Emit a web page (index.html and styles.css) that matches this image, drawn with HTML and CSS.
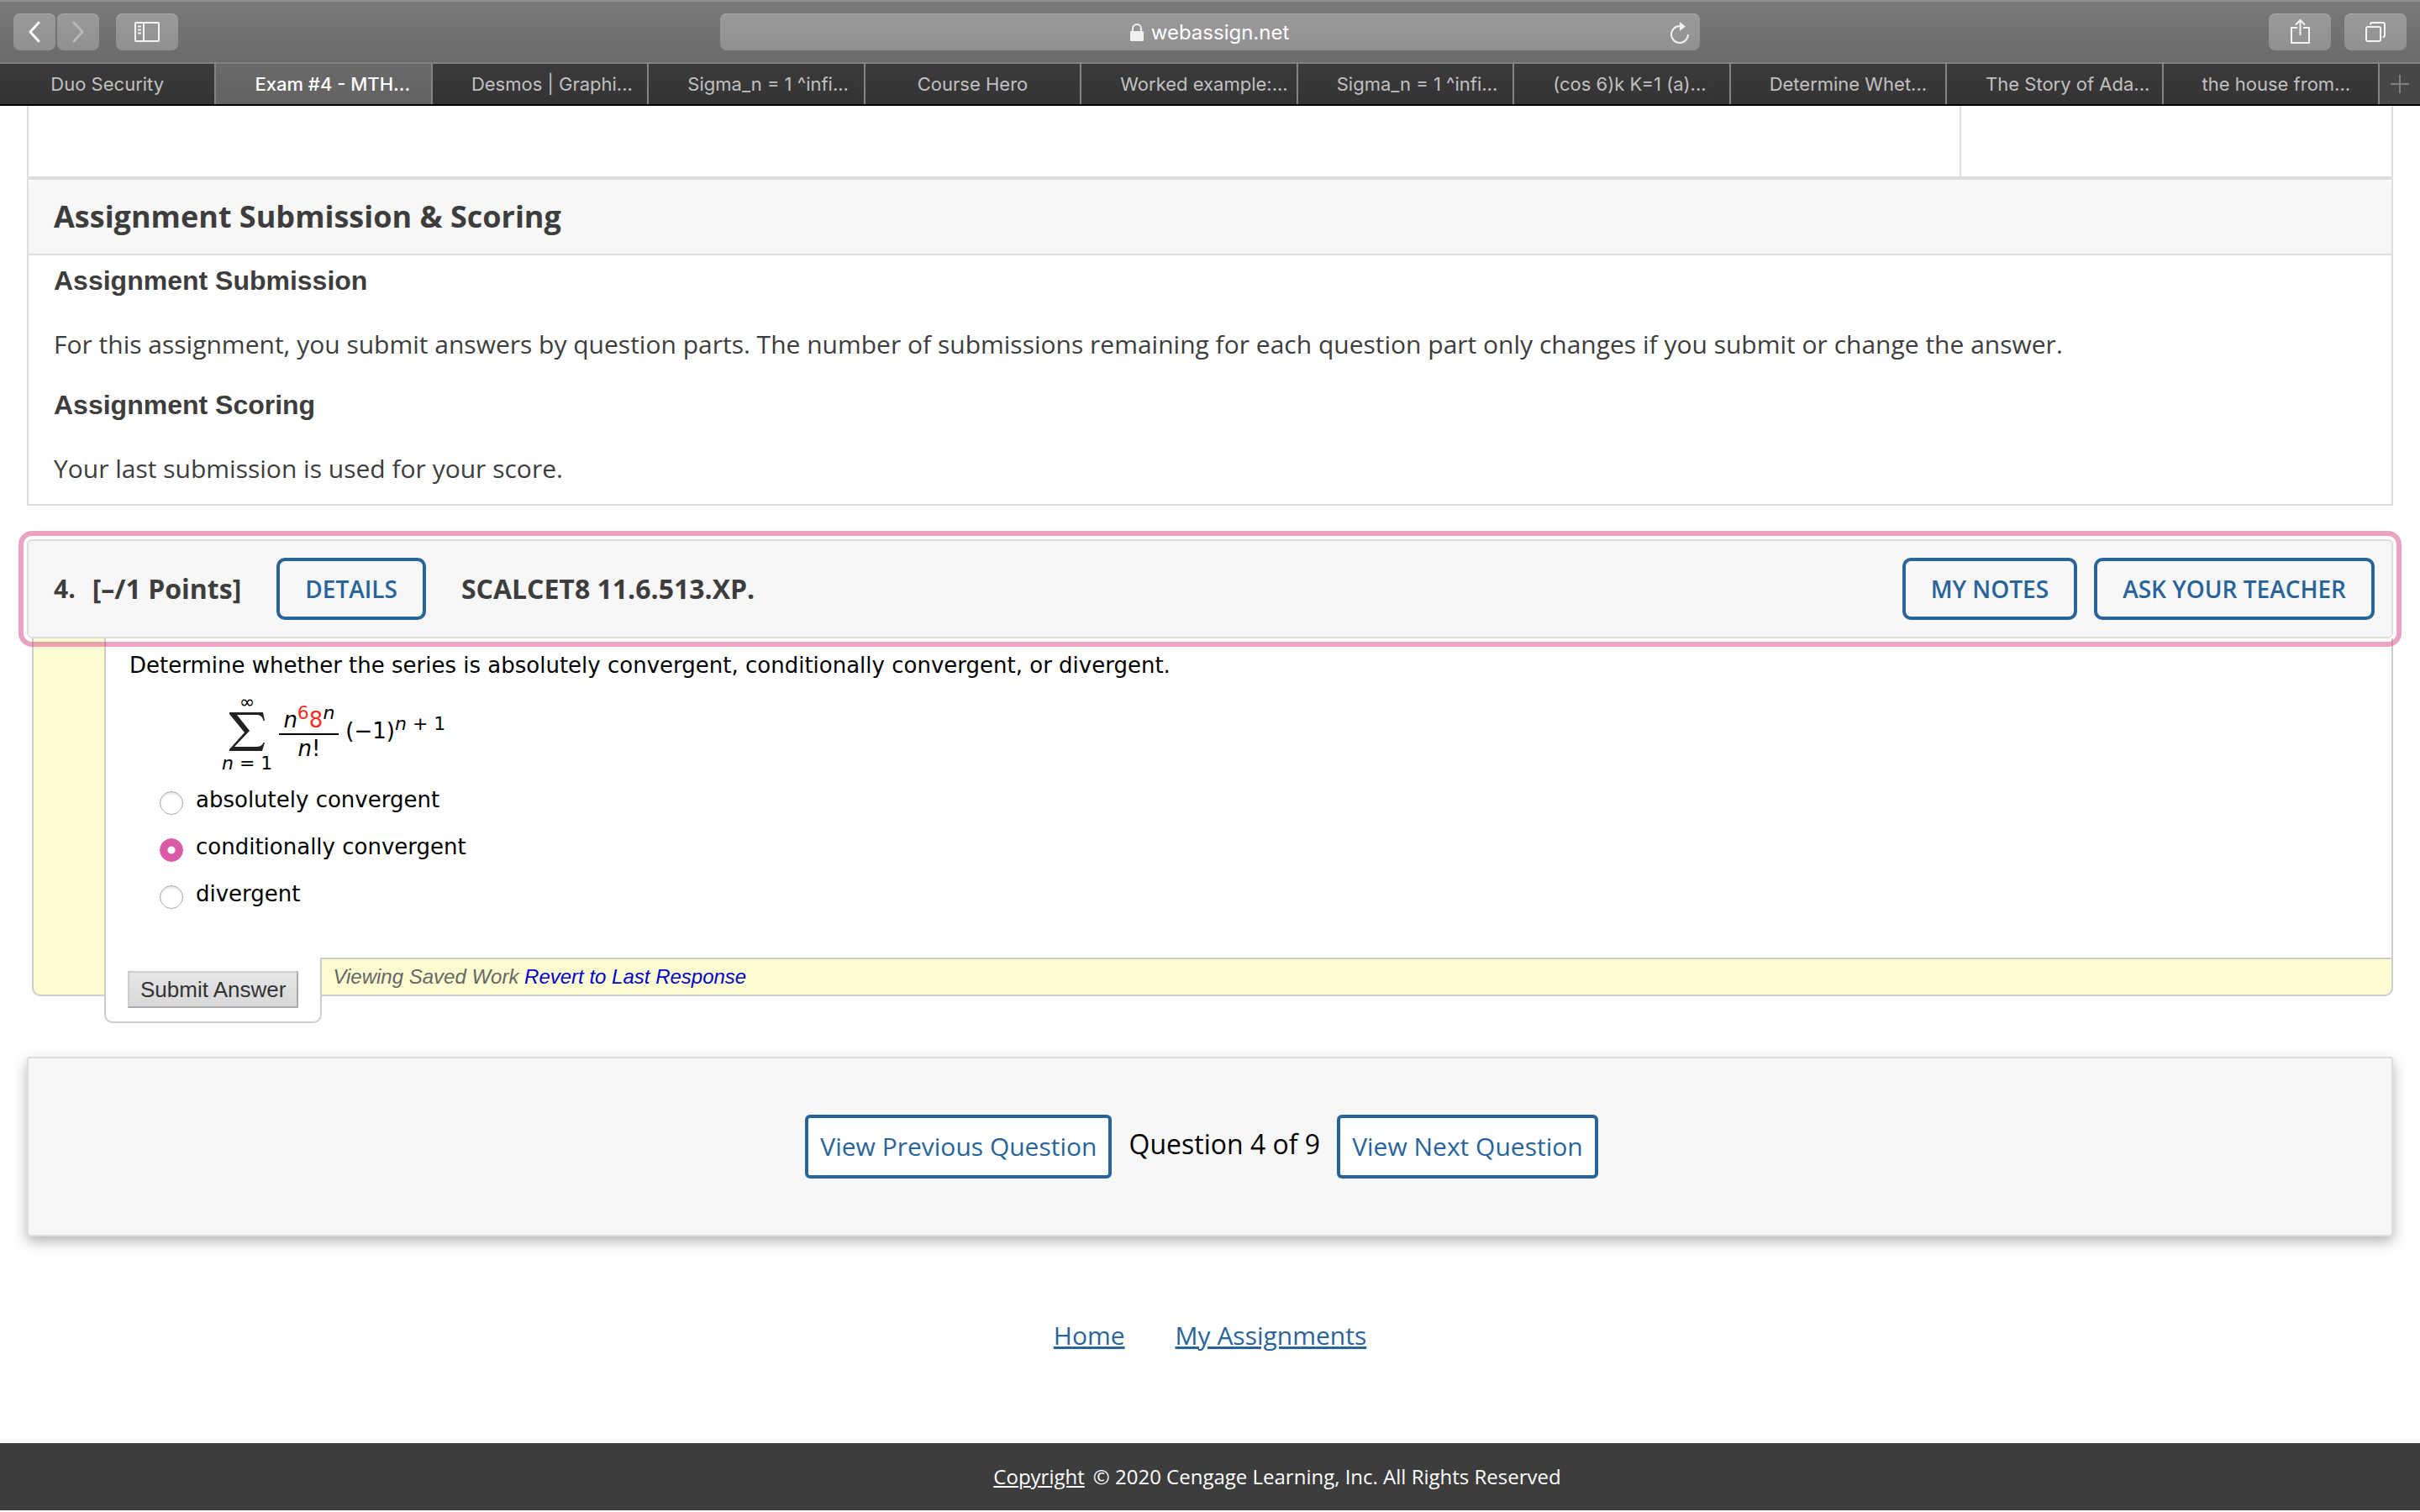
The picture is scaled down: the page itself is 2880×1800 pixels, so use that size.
FILE: index.html
```html
<!DOCTYPE html>
<html lang="en">
<head>
<meta charset="utf-8">
<title>Exam #4 - MTH</title>
<link rel="stylesheet" href="styles.css">
</head>
<body>
<header class="browser">
  <div class="toolbar">
    <div class="toolbar-group">
      <div class="history">
        <button class="tool tool-small" type="button" aria-label="Back">
          <svg width="50" height="44" viewBox="0 0 50 44"><path d="M30 11 L20 22 L30 33" fill="none" stroke="#fff" stroke-width="3" stroke-linecap="round" stroke-linejoin="round"/></svg>
        </button>
        <button class="tool tool-small" type="button" aria-label="Forward">
          <svg width="50" height="44" viewBox="0 0 50 44"><path d="M20 11 L30 22 L20 33" fill="none" stroke="#b9b7b8" stroke-width="3" stroke-linecap="round" stroke-linejoin="round"/></svg>
        </button>
      </div>
      <button class="tool" type="button" aria-label="Sidebar">
        <svg width="74" height="44" viewBox="0 0 74 44"><g fill="none" stroke="#f4f4f4" stroke-width="2"><rect x="23" y="11" width="28" height="22" rx="1"/><path d="M33 11V33"/><path d="M26 15.500H30M26 19.500H30M26 23.500H30"/></g></svg>
      </button>
    </div>
    <div class="address">
      <svg width="18" height="22" viewBox="0 0 18 22"><rect x="1" y="9" width="16" height="12" rx="1" fill="#f0f0f0"/><path d="M4 10V6a5 5 0 0 1 10 0V10" fill="none" stroke="#f0f0f0" stroke-width="2"/></svg>
      <span>webassign.net</span>
      <button class="reload" type="button" aria-label="Reload">
        <svg width="24" height="28" viewBox="0 0 24 28"><path d="M12 6 A10 10 0 1 0 22 16" fill="none" stroke="#f0f0f0" stroke-width="2"/><path d="M12 1 L19 6.500 L12 12Z" fill="#f0f0f0"/></svg>
      </button>
    </div>
    <div class="toolbar-group toolbar-end">
      <button class="tool" type="button" aria-label="Share">
        <svg width="74" height="44" viewBox="0 0 74 44"><g fill="none" stroke="#f4f4f4" stroke-width="2"><path d="M34 17H27V35H48V17H41"/><path d="M37.500 26V8M32 13.500L37.500 8L43 13.500"/></g></svg>
      </button>
      <button class="tool" type="button" aria-label="Show all tabs">
        <svg width="74" height="44" viewBox="0 0 74 44"><g fill="none" stroke="#f4f4f4" stroke-width="2"><rect x="26" y="16" width="17" height="17" rx="2"/><path d="M31 13.500V13a2 2 0 0 1 2-2H46a2 2 0 0 1 2 2V26a2 2 0 0 1-2 2H45.500"/></g></svg>
      </button>
    </div>
  </div>
  <nav class="tabs" aria-label="Tabs">
    <a class="tab tab-short" href="#">Duo Security</a>
    <a class="tab tab-current" href="#">Exam #4 - MTH...</a>
    <a class="tab" href="#">Desmos | Graphi...</a>
    <a class="tab" href="#">Sigma_n = 1 ^infi...</a>
    <a class="tab tab-short" href="#">Course Hero</a>
    <a class="tab" href="#">Worked example:...</a>
    <a class="tab" href="#">Sigma_n = 1 ^infi...</a>
    <a class="tab" href="#">(cos 6)k K=1 (a)...</a>
    <a class="tab" href="#">Determine Whet...</a>
    <a class="tab" href="#">The Story of Ada...</a>
    <a class="tab" href="#">the house from...</a>
    <button class="tab-new" type="button" aria-label="New tab">
      <svg width="24" height="24" viewBox="0 0 24 24"><path d="M12 1V23M1 12H23" stroke="#807e7f" stroke-width="2"/></svg>
    </button>
  </nav>
</header>

<main class="page">
  <section class="info">
    <div class="info-row"><div class="info-main"></div><div class="info-side"></div></div>
    <h2 class="info-title">Assignment Submission &amp; Scoring</h2>
    <div class="info-body">
      <h3>Assignment Submission</h3>
      <p>For this assignment, you submit answers by question parts. The number of submissions remaining for each question part only changes if you submit or change the answer.</p>
      <h3>Assignment Scoring</h3>
      <p>Your last submission is used for your score.</p>
    </div>
  </section>

  <section class="question">
    <header class="question-head" tabindex="-1">
      <span class="question-number">4.</span>
      <span class="question-points">[–/1 Points]</span>
      <button class="action" type="button">DETAILS</button>
      <span class="question-code">SCALCET8 11.6.513.XP.</span>
      <div class="question-actions">
        <button class="action" type="button">MY NOTES</button>
        <button class="action" type="button">ASK YOUR TEACHER</button>
      </div>
    </header>
    <form class="question-form">
      <div class="question-body">
        <p class="prompt">Determine whether the series is absolutely convergent, conditionally convergent, or divergent.</p>
        <div class="formula">
          <div class="sum">
            <span class="sum-limit sum-top">∞</span>
            <svg width="42" height="46" viewBox="0 0 42 46"><path d="M0 0H40L42 10H40.500C39 4 36 3 32 3H9L24 22L6 41H31C36 41 39 40 40.500 36H42L39 46H0V44L18 24L0 2Z" fill="#222"/></svg>
            <span class="sum-limit"><i>n</i> = 1</span>
          </div>
          <div class="fraction">
            <span class="numerator"><i>n</i><sup class="red">6</sup><span class="red">8</span><sup><i>n</i></sup></span>
            <span class="denominator"><i>n</i>!</span>
          </div>
          <span class="factor">(−1)<sup><i>n</i> + 1</sup></span>
        </div>
        <div class="choices">
          <label class="choice"><input type="radio" name="answer"><span>absolutely convergent</span></label>
          <label class="choice"><input type="radio" name="answer" checked><span>conditionally convergent</span></label>
          <label class="choice"><input type="radio" name="answer"><span>divergent</span></label>
        </div>
      </div>
      <div class="question-foot">
        <div class="submit-tab"><button class="submit" type="button">Submit Answer</button></div>
        <div class="saved">Viewing Saved Work <a href="#">Revert to Last Response</a></div>
      </div>
    </form>
  </section>

  <nav class="pager" aria-label="Questions">
    <button class="pager-button" type="button">View Previous Question</button>
    <span class="pager-status">Question 4 of 9</span>
    <button class="pager-button" type="button">View Next Question</button>
  </nav>

  <nav class="links" aria-label="Site">
    <a href="#">Home</a>
    <a href="#">My Assignments</a>
  </nav>
</main>

<footer class="footer"><a href="#">Copyright</a><span>© 2020 Cengage Learning, Inc. All Rights Reserved</span></footer>
</body>
</html>
```
FILE: styles.css
```css
* { box-sizing: border-box; }

body {
  margin: 0;
  background: #fff;
  color: #3d3d3d;
  font-family: "Open Sans", sans-serif;
  font-size: 30px;
  line-height: 40px;
}

button { font: inherit; cursor: pointer; }
svg { display: block; }
h2, h3, p { margin: 0; }

/* Browser bar */
.browser {
  font-family: Inter, sans-serif;
  border-bottom: 2px solid #000;
}
.toolbar {
  display: grid;
  grid-template-columns: 1fr minmax(0, 1166px) 1fr;
  align-items: center;
  height: 76px;
  padding: 0 16px;
  border-top: 2px solid #908e8f;
  border-bottom: 2px solid #858384;
  background: linear-gradient(#7b797a, #6b696a);
}
.toolbar-group { display: flex; gap: 20px; }
.toolbar-end { justify-content: flex-end; gap: 16px; }
.history { display: flex; gap: 2px; }
.tool {
  width: 74px;
  height: 44px;
  padding: 0;
  border: 0;
  border-radius: 8px;
  background: linear-gradient(#9b999a, #918f90);
  box-shadow: inset 0 1px #aaa8a9;
}
.tool-small { width: 50px; }
.address {
  display: grid;
  grid-template-columns: 1fr auto auto 1fr;
  align-items: center;
  gap: 8px;
  height: 44px;
  padding: 2px 12px 0 10px;
  border-radius: 8px;
  background: linear-gradient(#9b999a, #918f90);
  box-shadow: inset 0 1px #aaa8a9;
  color: #fff;
  font-size: 24px;
  line-height: 32px;
}
.address > svg { grid-column: 2; }
.reload {
  justify-self: end;
  padding: 0;
  border: 0;
  background: none;
}
.tabs {
  display: grid;
  grid-template-columns: repeat(11, minmax(0, 1fr)) 48px;
  height: 48px;
  background: linear-gradient(#3c3a3b, #343434);
}
.tab {
  padding: 8px 0 8px 46px;
  border-right: 2px solid #858384;
  color: #c0c0c0;
  font-size: 22px;
  line-height: 32px;
  text-decoration: none;
  white-space: nowrap;
}
.tab-short { padding-left: 0; text-align: center; }
.tab-current { background: linear-gradient(#6b696a, #636162); color: #fff; font-weight: 500; }
.tab-new {
  padding: 0 12px;
  border: 0;
  background: #484647;
}

/* Page */
.page { padding: 0 32px; }

.info { border: 2px solid #dedede; border-top: 0; }
.info-row {
  display: flex;
  height: 88px;
  border-bottom: 4px solid #dedede;
}
.info-main { flex: 1; }
.info-side { width: 514px; border-left: 2px solid #dedede; }
.info-title {
  padding: 20px 30px;
  border-bottom: 2px solid #dedede;
  border-radius: 8px 8px 0 0;
  background: #f7f7f7;
  font-size: 36px;
  line-height: 48px;
}
.info-body { padding: 10px 30px 22px; }
.info-body h3 {
  font-family: "Liberation Sans", sans-serif;
  font-size: 32px;
  line-height: 40px;
}
.info-body p { padding: 36px 0 32px; }
.info-body p:last-child { padding-bottom: 0; }

/* Question */
.question { margin-top: 40px; color: #000; }
.question-head {
  position: relative;
  display: flex;
  align-items: center;
  padding: 20px;
  padding-left: 30px;
  border: 2px solid #dedede;
  border-radius: 6px;
  outline: 6px solid rgba(216, 72, 138, 0.5);
  outline-offset: 4px;
  background: #f7f7f7;
  color: #3d3d3d;
  font-weight: 700;
}
.question-points { margin: 0 42px 0 20px; font-size: 32px; }
.question-code { margin-left: 42px; font-size: 32px; }
.question-actions { display: flex; gap: 20px; margin-left: auto; }
.action {
  padding: 13px 30px;
  border: 4px solid #28649a;
  border-radius: 10px;
  background: transparent;
  color: #28649a;
  font-size: 28px;
  font-weight: 600;
}
.question-form {
  margin-left: 6px;
  border: 2px solid #ccc;
  border-top: 0;
  border-radius: 0 0 10px 10px;
  background: #fefdd2;
  font-family: "DejaVu Sans", sans-serif;
  font-size: 26px;
  line-height: 32px;
}
.question-body {
  margin-left: 84px;
  padding: 16px 28px 58px;
  border-left: 2px solid #ccc;
  background: #fff;
}
.formula {
  display: flex;
  align-items: center;
  margin: 16px 0 12px 110px;
}
.formula sup { font-size: 22px; line-height: 0; vertical-align: 10px; }
.sum { display: flex; flex-direction: column; align-items: center; }
.sum-limit { font-size: 22px; line-height: 30px; }
.sum-top { line-height: 24px; }
.fraction { display: flex; flex-direction: column; align-items: center; margin: 0 8px; }
.numerator { padding: 0 5px; border-bottom: 2px solid #000; }
.factor { padding-bottom: 8px; }
.red { color: #ee3124; }
.choices { display: flex; flex-direction: column; gap: 22px; padding-left: 36px; }
.choice { display: flex; align-items: flex-start; gap: 15px; }
.choice input {
  appearance: none;
  width: 28px;
  height: 28px;
  margin: 6px 0 0;
  border: 1px solid #a8a8a8;
  border-radius: 50%;
  background: #fff;
  box-shadow: inset 0 2px 2px #e4e4e4;
}
.choice input:checked {
  border-color: #dc5aa8;
  background: radial-gradient(circle, #fff 4px, #dc5aa8 5px);
  box-shadow: none;
}
.question-foot { display: flex; align-items: flex-start; margin: 0 0 -34px 84px; }
.submit-tab {
  padding: 16px 26px;
  border: 2px solid #ccc;
  border-top: 0;
  border-radius: 0 0 10px 10px;
  background: #fff;
}
.submit {
  display: block;
  padding: 4px 13px;
  border: 2px solid;
  border-color: #ccc #aaa #aaa #ccc;
  background: linear-gradient(#e6e6e6, #d8d8d8);
  color: #333;
  font-family: "Liberation Sans", sans-serif;
  font-size: 26px;
}
.saved {
  flex: 1;
  padding: 5px 13px;
  border-top: 2px solid #ccc;
  color: #666;
  font-family: "Liberation Sans", sans-serif;
  font-size: 24px;
  font-style: italic;
}
.saved a { color: #0000cc; text-decoration: none; }

/* Pager */
.pager {
  display: flex;
  align-items: center;
  justify-content: center;
  gap: 20px;
  margin-top: 72px;
  padding: 67px 20px 67px 0;
  border: 2px solid #dedede;
  border-radius: 4px;
  background: #f7f7f7;
  box-shadow: 0 6px 16px rgba(0, 0, 0, 0.3);
  color: #000;
}
.pager-button {
  padding: 14px;
  border: 4px solid #28649a;
  border-radius: 6px;
  background: #fff;
  color: #28649a;
}
.pager-status { padding-bottom: 6px; font-size: 32px; }

.links {
  display: flex;
  justify-content: center;
  gap: 60px;
  padding: 98px 0 108px;
}
.links a { color: #28649a; }

.footer {
  display: flex;
  justify-content: center;
  gap: 10px;
  padding: 20px 0 20px 160px;
  background: #3d3d3d;
  color: #fff;
  font-size: 24px;
}
.footer a { color: inherit; }
```
